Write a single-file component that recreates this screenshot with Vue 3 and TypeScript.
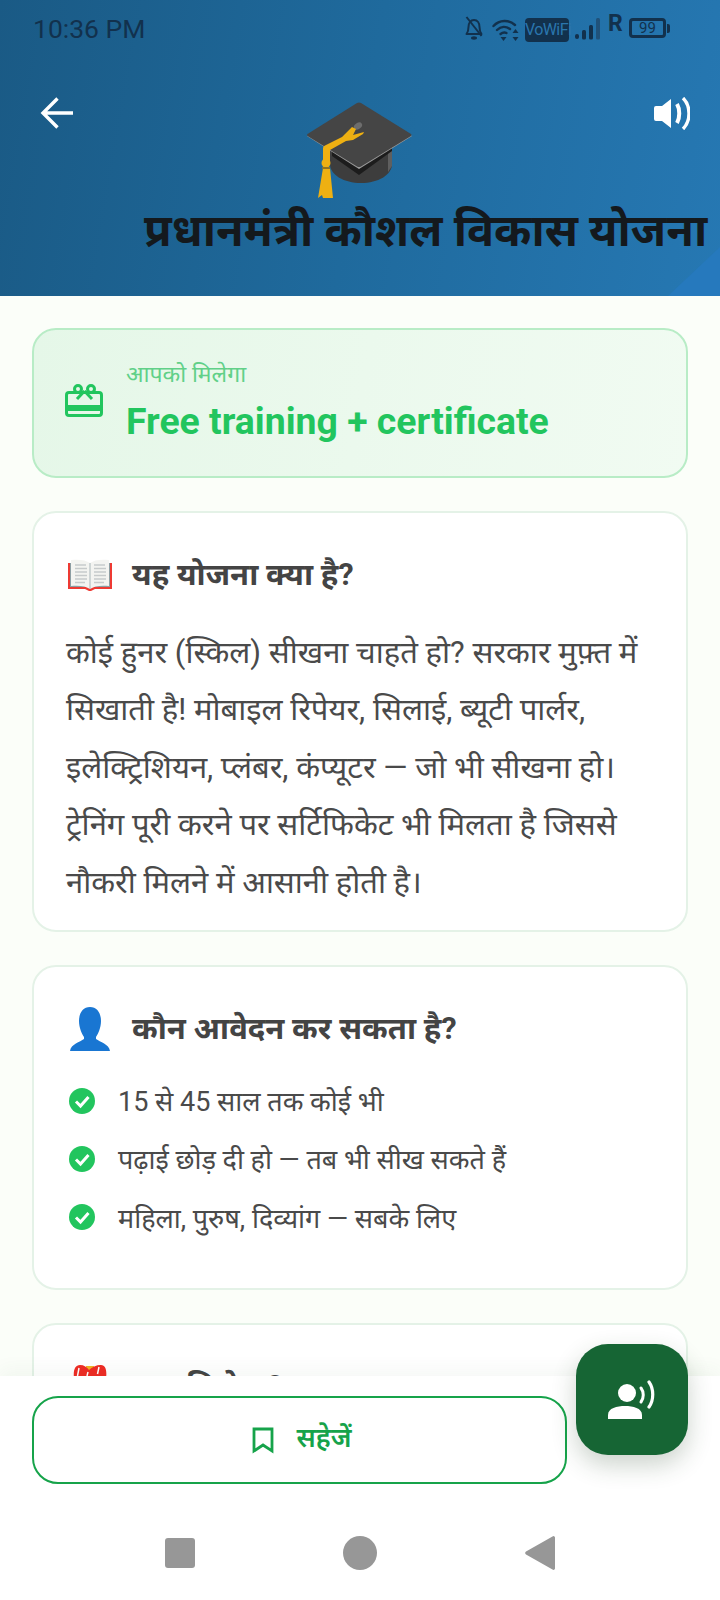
<script setup lang="ts">
const eligibility: string[] = [
  '15 से 45 साल तक कोई भी',
  'पढ़ाई छोड़ दी हो — तब भी सीख सकते हैं',
  'महिला, पुरुष, दिव्यांग — सबके लिए',
]
</script>

<template>
  <div class="screen">
    <header class="hero">
      <div class="hero-corner"></div>
      <div class="status">
        <span class="time">10:36 PM</span>
        <div class="status-icons">
          <svg class="s-bell" viewBox="0 0 18 24" width="18" height="24"><path d="M1.500 18c1.500-2 2-3.500 2-7 0-4 2-7 5.500-7s5.500 3 5.500 7c0 3.500.5 5 2 7z" fill="none" stroke="#12314d" stroke-width="2" stroke-linejoin="round"/><path d="M1.500 1l15 19" stroke="#12314d" stroke-width="2"/><ellipse cx="9" cy="22" rx="3" ry="1.700" fill="#12314d"/></svg>
          <svg class="s-wifi" viewBox="0 0 27 23" width="27" height="23"><g fill="none" stroke="#12314d" stroke-width="2.400" stroke-linecap="round"><path d="M1.500 8C7.500 1.500 17 1.500 23 7"/><path d="M5 12c4-4 9-4 13-1"/><path d="M8.500 16c2.500-2 4-2 6-1"/></g><path d="M11.500 23l-3-4h6z" fill="#12314d"/><path d="M23.500 11l3 4h-6zM23.500 23l-3-4h6z" fill="#12314d"/></svg>
          <span class="vowifi">VoWiFi</span>
          <svg class="s-signal" viewBox="0 0 25 22" width="25" height="22"><rect x="0" y="16" width="4" height="5" rx="2" fill="#12314d"/><rect x="7" y="12" width="4" height="9.500" rx="1.500" fill="#12314d"/><rect x="14" y="7" width="4" height="14.500" rx="1.500" fill="#12314d"/><rect x="21" y="0" width="4" height="21.500" rx="1.500" fill="#20527a"/></svg>
          <span class="roam">R</span>
          <div class="battery"><span class="battery-body">99</span><span class="battery-cap"></span></div>
        </div>
      </div>
      <div class="hero-actions">
        <svg viewBox="0 0 33 32" width="33" height="32"><path d="M33 16H4M17.500 1.500L3 16l14.500 14.500" fill="none" stroke="#fff" stroke-width="3.400"/></svg>
        <svg viewBox="0 0 36 33" width="36" height="33"><path d="M0 11q0-2 2-2h6L17 2v29l-9-7H2q-2 0-2-2z" fill="#fff"/><path d="M23 7c3 5 3 14 0 19" fill="none" stroke="#fff" stroke-width="4"/><path d="M29 1c8 8 8 23 0 31" fill="none" stroke="#fff" stroke-width="3.400"/></svg>
      </div>
      <svg class="cap" viewBox="0 0 108 97" width="108" height="97">
        <path d="M24 40v22c0 11 14 19 31 19s31-8 31-19V40z" fill="#3d3d3d"/>
        <path d="M82 44v26l4-6V42z" fill="#5f5f5f"/>
        <path d="M26 44l27 23 33-26v8L53 73 26 54z" fill="#1c1c1c"/>
        <path d="M1 34L53 67l53-33L53 3z" fill="#9a9a9a"/>
        <path d="M1.500 32L51 1a4 4 0 0 1 4 0l50 31a1.500 1.500 0 0 1 0 2L55 64.500a4 4 0 0 1-4 0L1.500 34a1.500 1.500 0 0 1 0-2z" fill="#454545"/>
        <ellipse cx="52" cy="24" rx="4.500" ry="3" transform="rotate(-35 52 24)" fill="#6d6d6d"/>
        <path d="M46 25l4 2-3 6 11-3-1 2-10 6-7 1-16 9v12h-7V46q0-2 3-3l16-8z" fill="#eeb012"/>
        <circle cx="20" cy="61" r="4.500" fill="#eeb012"/>
        <path d="M17 66h7l3 30H17l-1-3-4 3z" fill="#eeb012"/>
        <rect x="16" y="65" width="8" height="2" fill="#8f7424"/>
      </svg>
      <h1 class="hero-title">प्रधानमंत्री कौशल विकास योजना</h1>
    </header>

    <main class="content">
      <section class="benefit">
        <svg viewBox="0 0 38 33" width="38" height="33" class="gift"><g fill="none" stroke="#22c55e" stroke-width="3"><rect x="1.500" y="8.500" width="35" height="23" rx="2.500"/><circle cx="13" cy="5" r="3.500"/><circle cx="26" cy="5" r="3.500"/><path d="M19.500 7L12 15M19.500 7L27 15"/></g><rect x="1.500" y="21" width="35" height="6" fill="#22c55e"/></svg>
        <div class="benefit-text">
          <span class="benefit-label">आपको मिलेगा</span>
          <strong class="benefit-value">Free training + certificate</strong>
        </div>
      </section>

      <section class="card about">
        <div class="card-head">
          <span class="head-icon">
            <svg viewBox="0 0 44 32" width="44" height="32"><path d="M0 4h44v26H27l-4 2h-2l-4-2H0z" fill="#ee3a33"/><path d="M2 4h40v24H2z" fill="#8c9ea3"/><path d="M3 1c8-1 15 0 19 3 4-3 11-4 19-3v26c-8-1-15 0-19 3-4-3-11-4-19-3z" fill="#f3f4f1"/><g stroke="#c6cacb" stroke-width="1.300"><path d="M7 6h11M7 9.500h12M7 13h12M7 16.500h12M7 20h12M7 23.500h10M26 6h11M26 9.500h12M26 13h12M26 16.500h12M26 20h12M26 23.500h10"/></g><path d="M22 4v26" stroke="#a9b7ba"/></svg>
          </span>
          <h2>यह योजना क्या है?</h2>
        </div>
        <p class="about-body">कोई हुनर (स्किल) सीखना चाहते हो? सरकार मुफ़्त में सिखाती है! मोबाइल रिपेयर, सिलाई, ब्यूटी पार्लर, इलेक्ट्रिशियन, प्लंबर, कंप्यूटर — जो भी सीखना हो। ट्रेनिंग पूरी करने पर सर्टिफिकेट भी मिलता है जिससे नौकरी मिलने में आसानी होती है।</p>
      </section>

      <section class="card who">
        <div class="card-head">
          <span class="head-icon">
            <svg viewBox="0 0 40 44" width="40" height="44"><path d="M20 0c7 0 11 6 11 14 0 7-3 13-5 16v2c4 3 13 5 14 12H0c1-7 10-9 14-12v-2c-2-3-5-9-5-16C9 6 13 0 20 0z" fill="#1976d2"/></svg>
          </span>
          <h2>कौन आवेदन कर सकता है?</h2>
        </div>
        <ul class="who-list">
          <li v-for="item in eligibility" :key="item">
            <svg viewBox="0 0 26 26" width="26" height="26"><circle cx="13" cy="13" r="13" fill="#22c55e"/><path d="M7 13.500l4.500 4.500L19.500 9" fill="none" stroke="#fff" stroke-width="3"/></svg>
            <span>{{ item }}</span>
          </li>
        </ul>
      </section>

      <section class="card gifts">
        <div class="card-head">
          <span class="head-icon">
            <svg viewBox="0 0 42 44" width="42" height="44"><path d="M0 11h42v33H0z" fill="#f0b323"/><path d="M17 1h8v6h-8z" fill="#f0b323"/><path d="M5 14C4 5 6 0 11 0c4 0 7 2 9 5 3-3 7-5 12-5 5 0 6 6 5 14z" fill="#ef2b24"/><path d="M10 3l-1.500 8M19 7l-1 4M30 2l-1.500 7" stroke="#fff" stroke-width="1.500"/></svg>
          </span>
          <h2>क्या मिलेगा?</h2>
        </div>
      </section>
    </main>

    <footer class="bottom">
      <button class="save" type="button">
        <svg viewBox="0 0 22 27" width="22" height="27"><path d="M2 2h18v22l-9-6-9 6z" fill="none" stroke="#16a34a" stroke-width="2.800"/></svg>
        <span class="save-label">सहेजें</span>
      </button>
      <nav class="sysnav">
        <span class="nav-square"></span>
        <span class="nav-circle"></span>
        <svg viewBox="0 0 30 34" width="30" height="34"><path d="M30 1.500v31a1.500 1.500 0 0 1-2.500 1L1 18.500a2 2 0 0 1 0-3L27.500.5a1.500 1.500 0 0 1 2.500 1z" fill="#979797"/></svg>
      </nav>
    </footer>

    <button class="fab" type="button" aria-label="voice">
      <svg viewBox="0 0 48 39" width="48" height="39"><circle cx="19" cy="13" r="9" fill="#fff"/><path d="M0 39v-4c0-7 9-9 17-9s17 2 17 9v4z" fill="#fff"/><path d="M33 8c3 4 3 10 0 14" fill="none" stroke="#fff" stroke-width="3" stroke-linecap="round"/><path d="M41 2c5 7 5 18 0 25" fill="none" stroke="#fff" stroke-width="3.200" stroke-linecap="round"/></svg>
    </button>
  </div>
</template>

<style>
html, body { margin: 0; padding: 0; }
</style>

<style scoped>
.screen {
  position: relative;
  width: 720px;
  height: 1600px;
  overflow: hidden;
  display: flex;
  flex-direction: column;
  background: #fbfef9;
  font-family: Roboto, "Noto Sans", sans-serif;
}
.hero {
  position: relative;
  flex: 0 0 296px;
  height: 296px;
  overflow: hidden;
  background: linear-gradient(100deg, #1a5a85 0%, #1f6a9d 50%, #2678b3 100%);
  display: flex;
  flex-direction: column;
}
.hero-corner {
  position: absolute;
  right: 0;
  bottom: 0;
  width: 52px;
  height: 49px;
  background: #2679bd;
  clip-path: polygon(100% 0, 100% 100%, 0 100%);
}
.status {
  position: relative;
  flex: none;
  height: 56px;
  padding: 0 50px 0 33px;
  display: flex;
  align-items: center;
  justify-content: space-between;
  color: #12314d;
}
.time { font-size: 26.5px; }
.status-icons { display: flex; align-items: center; }
.s-wifi { margin: 3px 0 0 9px; }
.vowifi {
  background: #12314d;
  color: #2a76ad;
  border-radius: 4px;
  font-size: 16px;
  width: 44px;
  height: 24px;
  margin: 4px 0 0 6px;
  text-align: center;
  line-height: 24px;
  letter-spacing: -0.6px;
}
.s-signal { margin: 1px 0 0 6px; }
.roam { font-size: 23px; line-height: 20px; font-weight: 700; margin: -8px 8px 0 8px; width: 13px; }
.battery { display: flex; align-items: center; }
.battery-body {
  box-sizing: border-box;
  border: 3px solid #12314d;
  border-radius: 4px;
  width: 37px;
  height: 20px;
  line-height: 14px;
  text-align: center;
  font-size: 15px;
}
.battery-cap { width: 3px; height: 9px; background: #12314d; border-radius: 0 2px 2px 0; margin-left: 1px; }
.hero-actions {
  position: relative;
  display: flex;
  justify-content: space-between;
  align-items: flex-start;
  padding: 41px 30px 0 40px;
}
.cap { position: absolute; left: 306px; top: 102px; }
.hero-title {
  position: absolute;
  left: 144px;
  top: 204px;
  margin: 0;
  white-space: nowrap;
  font-size: 45px;
  line-height: 54px;
  font-weight: 700;
  color: #14191d;
}
.content {
  flex: 1;
  min-height: 0;
  overflow: hidden;
  display: flex;
  flex-direction: column;
  gap: 33px;
  padding: 32px 32px 0;
}
.benefit {
  flex: none;
  box-sizing: border-box;
  height: 149.5px;
  display: flex;
  align-items: center;
  gap: 23px;
  padding: 0 31px;
  border: 2px solid #b8ecc6;
  border-radius: 24px;
  background: linear-gradient(100deg, #e5f7e8, #f1fbf2);
}
.gift { margin-bottom: 4px; }
.benefit-text { display: flex; flex-direction: column; gap: 7px; margin-bottom: 3px; }
.benefit-label { font-size: 23px; line-height: 32px; color: #61d088; }
.benefit-value { font-size: 37.4px; line-height: 46px; font-weight: 700; color: #22c55e; }
.card {
  flex: none;
  box-sizing: border-box;
  background: #fff;
  border: 2px solid #e4f2e7;
  border-radius: 24px;
  padding: 40px 32px 0;
}
.card-head { display: flex; align-items: center; gap: 18px; height: 44px; }
.head-icon { width: 48px; display: flex; justify-content: center; }
.card-head h2 { margin: 0; font-size: 31px; line-height: 44px; font-weight: 700; color: #444; }
.about { height: 421px; }
.about-body { margin: 27px -4px 0 0; font-size: 31px; line-height: 57.6px; color: #4a4a4a; }
.who { height: 325px; }
.who-list { list-style: none; margin: 21px 0 0; padding: 0 0 0 3px; display: flex; flex-direction: column; }
.who-list li { display: flex; align-items: center; gap: 23px; height: 58.3px; font-size: 27px; color: #4a4a4a; }
.gifts { height: 200px; }
.bottom {
  position: relative;
  flex: 0 0 224px;
  height: 224px;
  box-sizing: border-box;
  background: #fff;
  box-shadow: 0 -6px 18px rgba(60, 90, 60, 0.05);
  padding: 20px 32px 0;
  display: flex;
  flex-direction: column;
}
.save {
  width: 535px;
  height: 88px;
  flex: none;
  box-sizing: border-box;
  border: 2px solid #16a34a;
  border-radius: 26px;
  background: #fff;
  color: #16a34a;
  font-family: inherit;
  font-size: 27px;
  font-weight: 600;
  display: flex;
  align-items: center;
  justify-content: center;
  gap: 23px;
  padding: 0 0 0 4px;
}
.save-label { margin-bottom: 8px; }
.sysnav {
  margin-top: 52px;
  padding: 0 133px;
  display: flex;
  align-items: center;
  justify-content: space-between;
}
.nav-square { width: 30px; height: 30px; border-radius: 3px; background: #979797; }
.nav-circle { width: 34px; height: 34px; border-radius: 50%; background: #979797; }
.fab {
  position: absolute;
  left: 576px;
  top: 1344px;
  width: 112px;
  height: 111px;
  border: none;
  border-radius: 32px;
  background: #166534;
  box-shadow: 0 10px 24px rgba(40, 70, 40, 0.24);
  display: flex;
  align-items: center;
  justify-content: center;
  padding: 0;
}
</style>
